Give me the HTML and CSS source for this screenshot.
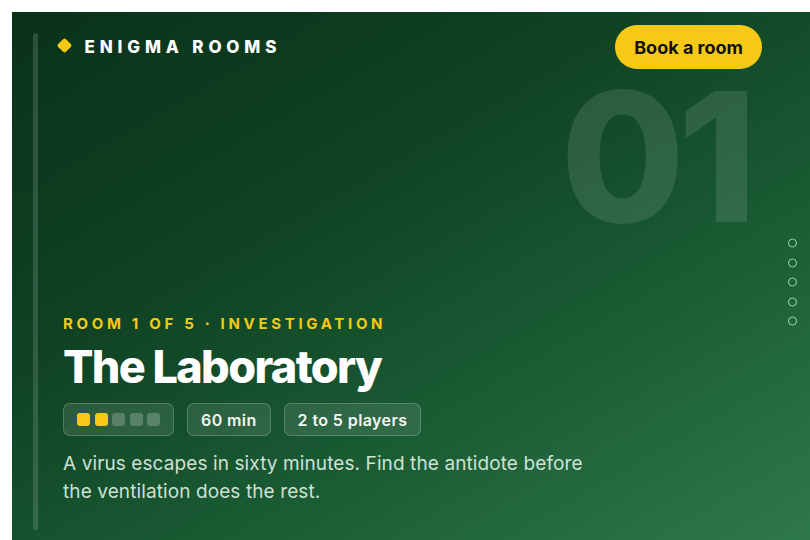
FILE: index.html
```html
<!DOCTYPE html>
<html lang="en">
<head>
<meta charset="utf-8">
<title>Enigma Rooms — The Laboratory</title>
<link rel="stylesheet" href="styles.css">
</head>
<body>
<div class="stage">
  <section class="hero">
    <span class="rail"></span>
    <div class="main">
      <header class="top">
        <div class="brand">
          <span class="diamond"></span>
          <span class="brand-name">ENIGMA ROOMS</span>
        </div>
        <a class="book" href="#">Book a room</a>
      </header>
      <div class="content">
        <p class="eyebrow">ROOM 1 OF 5 · INVESTIGATION</p>
        <h1 class="title">The Laboratory</h1>
        <div class="chips">
          <span class="chip chip-level">
            <i class="sq on"></i><i class="sq on"></i><i class="sq"></i><i class="sq"></i><i class="sq"></i>
          </span>
          <span class="chip">60 min</span>
          <span class="chip">2 to 5 players</span>
        </div>
        <p class="desc">A virus escapes in sixty minutes. Find the antidote before the ventilation does the rest.</p>
      </div>
    </div>
    <span class="bignum">01</span>
    <nav class="dots">
      <span class="dot"></span><span class="dot"></span><span class="dot"></span><span class="dot"></span><span class="dot"></span>
    </nav>
  </section>
</div>
</body>
</html>
```
FILE: styles.css
```css
html, body {
  margin: 0;
  padding: 0;
  background: #ffffff;
  overflow: hidden;
}

body {
  font-family: "Inter", "Noto Sans", "Liberation Sans", sans-serif;
}

.stage {
  padding: 12px 0 0 12px;
}

.hero {
  position: relative;
  width: 810px;
  height: 540px;
  display: flex;
  background: linear-gradient(150deg, #0a3219 0%, #0f4223 35%, #1a5c34 65%, #2f7a4e 100%);
  overflow: hidden;
  color: #fff;
}

.rail {
  flex: none;
  width: 5px;
  margin: 21px 0 22px 21px;
  border-radius: 3px;
  background: rgba(255, 255, 255, 0.14);
}

.main {
  flex: 1;
  display: flex;
  flex-direction: column;
  padding: 13px 60px 46px 0;
  position: relative;
  z-index: 1;
}

.top {
  display: flex;
  align-items: center;
  justify-content: space-between;
  padding-left: 20px;
}

.brand {
  display: flex;
  align-items: center;
  gap: 15px;
}

.diamond {
  width: 11px;
  height: 11px;
  background: #f6c916;
  border-radius: 2px;
  transform: rotate(45deg);
  margin-left: 0.5px;
  margin-top: -4px;
}

.brand-name {
  font-size: 17px;
  font-weight: 800;
  letter-spacing: 0.285em;
  color: #fff;
}

.book {
  display: inline-flex;
  align-items: center;
  height: 44px;
  padding: 0 19px;
  border-radius: 22px;
  background: #f6c916;
  color: #111;
  font-size: 18px;
  font-weight: 700;
  text-decoration: none;
}

.content {
  margin-top: auto;
  padding-left: 25px;
}

.eyebrow {
  margin: 0;
  font-size: 15px;
  line-height: 20px;
  font-weight: 700;
  letter-spacing: 0.245em;
  color: #f6c916;
}

.title {
  margin: 8px 0 0;
  font-size: 45px;
  line-height: 1.1;
  font-weight: 800;
  letter-spacing: -0.036em;
  color: #fff;
}

.chips {
  display: flex;
  gap: 13px;
  margin-top: 12px;
}

.chip {
  display: inline-flex;
  align-items: center;
  height: 33px;
  box-sizing: border-box;
  padding: 0 13px;
  border-radius: 7px;
  background: rgba(255, 255, 255, 0.1);
  border: 1px solid rgba(255, 255, 255, 0.2);
  font-size: 16px;
  font-weight: 600;
  letter-spacing: 0.4px;
  color: #f2f7f3;
}

.chip-level {
  gap: 4.5px;
  letter-spacing: 0;
}

.sq {
  width: 13px;
  height: 13px;
  border-radius: 3px;
  background: rgba(255, 255, 255, 0.22);
}

.sq.on {
  background: #f6c916;
}

.desc {
  margin: 14px 0 0;
  max-width: 540px;
  font-size: 19px;
  line-height: 28px;
  letter-spacing: 0.1px;
  color: rgba(228, 244, 232, 0.9);
}

.bignum {
  position: absolute;
  top: 73px;
  right: 72px;
  font-size: 180px;
  line-height: 0.8;
  font-weight: 800;
  letter-spacing: -0.04em;
  color: rgba(255, 255, 255, 0.11);
  pointer-events: none;
}

.dots {
  position: absolute;
  right: 25px;
  top: 50%;
  transform: translateY(-50%);
  display: flex;
  flex-direction: column;
  gap: 10.5px;
}

.dot {
  width: 9px;
  height: 9px;
  box-sizing: border-box;
  border-radius: 50%;
  border: 1.5px solid rgba(190, 235, 200, 0.8);
}
```
